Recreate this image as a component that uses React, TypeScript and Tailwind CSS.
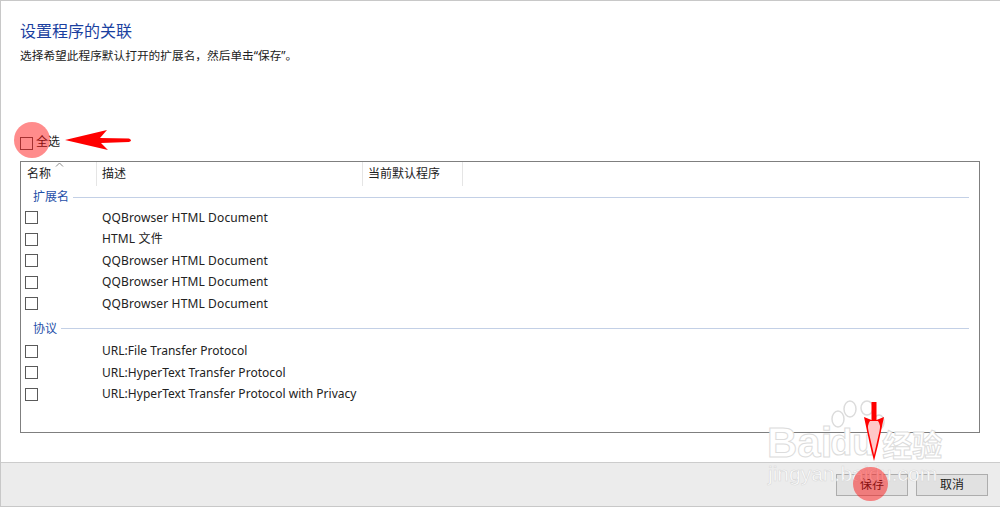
const font = { fontFamily: '"Noto Sans", "Noto Sans CJK SC", sans-serif' }

const extensions = [
  'QQBrowser HTML Document',
  'HTML 文件',
  'QQBrowser HTML Document',
  'QQBrowser HTML Document',
  'QQBrowser HTML Document',
]
const protocols = [
  'URL:File Transfer Protocol',
  'URL:HyperText Transfer Protocol',
  'URL:HyperText Transfer Protocol with Privacy',
]

function Box() {
  return <div className="w-[13px] h-[13px] border border-[#5a5a5a] bg-white shrink-0" />
}

function Group({ label, className }: { label: string; className: string }) {
  return (
    <div className={`flex items-center h-[16px] pl-[12px] gap-[4px] ${className}`}>
      <span className="text-[12px] leading-none text-[#1f4fa8]">{label}</span>
      <div className="flex-1 h-px bg-[#c3d0e6] mr-[10px]" />
    </div>
  )
}

function Row({ text, className }: { text: string; className: string }) {
  return (
    <div className="flex items-center h-[21.5px] pl-[4px]">
      <Box />
      <span className={`ml-[64px] text-[12px] leading-none text-[#222] ${className}`}>{text}</span>
    </div>
  )
}

function Arrow({ className }: { className: string }) {
  return (
    <svg className={className} viewBox="0 0 68 22" fill="#ff0000">
      <path d="M0 10 L42 0 L35 8 L64 8.5 Q68 10.5 64 12 L36 13 L43 20 Z" />
    </svg>
  )
}

export default function App() {
  return (
    <div className="relative w-[1000px] h-[507px] overflow-hidden bg-white flex flex-col border-t border-l border-[#c8c8c8]" style={font}>
      <div className="flex-1 flex flex-col pl-[19px] pr-[20px]">
        <h1 className="mt-[20px] text-[16px] leading-[20px] font-normal text-[#1a3fa0]">设置程序的关联</h1>
        <p className="mt-[6px] text-[11.7px] leading-[16px] text-[#222]">选择希望此程序默认打开的扩展名，然后单击“保存”。</p>
        <div className="mt-[69px] h-[20px] flex items-center">
          <div className="mt-[3px]"><Box /></div>
          <span className="ml-[3px] text-[12px] leading-none text-[#222]">全选</span>
        </div>
        <div className="mt-[9px] h-[272px] w-[960px] border border-[#7f7f7f] flex flex-col">
          <div className="relative flex h-[24px] text-[12px] text-[#222]">
            <div className="w-[76px] pl-[6px] flex items-center border-r border-[#e5e5e5]">名称</div>
            <div className="w-[266px] pl-[5px] flex items-center border-r border-[#e5e5e5]">描述</div>
            <div className="w-[100px] pl-[5px] flex items-center border-r border-[#e5e5e5]">当前默认程序</div>
            <svg className="absolute left-[34px] top-[0px]" width="9" height="5" viewBox="0 0 9 5" fill="none" stroke="#8a8a8a" strokeWidth="1">
              <path d="M1 4.5 L4.5 1 L8 4.5" />
            </svg>
          </div>
          <Group label="扩展名" className="mt-[3px]" />
          <div className="mt-[2px]">
            {extensions.map((t, i) => <Row key={i} text={t} className="tracking-[0.13px]" />)}
          </div>
          <Group label="协议" className="mt-[6px]" />
          <div className="mt-[4px]">
            {protocols.map((t, i) => <Row key={i} text={t} className="tracking-[0.03px]" />)}
          </div>
        </div>
      </div>
      <div className="h-[44px] mb-[1px] bg-[#ececec] border-t border-[#cccccc] flex items-center justify-end gap-[8px] pr-[12px]">
        <button className="w-[72px] h-[22px] bg-[#e1e1e1] border border-[#adadad] text-[12px] leading-none text-[#222]">保存</button>
        <button className="w-[72px] h-[22px] bg-[#e1e1e1] border border-[#adadad] text-[12px] leading-none text-[#222]">取消</button>
      </div>
      <div className="absolute bottom-0 left-0 right-0 h-px bg-[#c8c8c8]" />

      {/* baidu watermark */}
      <div className="absolute left-[766px] top-[421px] flex items-center text-[42px] leading-none font-bold text-white [-webkit-text-stroke:1px_#dcdcdc] pointer-events-none" style={{ fontFamily: '"Liberation Sans", sans-serif' }}>
        <span>Bai</span>
        <span className="ml-[-2px] text-[36px]">du</span>
        <span className="ml-[8px] text-[30px]" style={{ fontFamily: '"Noto Sans CJK SC", sans-serif' }}>经验</span>
      </div>
      <svg className="absolute left-[828px] top-[399px] pointer-events-none" width="60" height="40" viewBox="0 0 60 40" fill="#ffffff" stroke="#dcdcdc" strokeWidth="1.5">
        <ellipse cx="9" cy="19" rx="6" ry="8" />
        <ellipse cx="21" cy="9" rx="6" ry="8" />
        <ellipse cx="38" cy="8" rx="6" ry="7" />
        <ellipse cx="50" cy="22" rx="5" ry="7" />
      </svg>
      <div className="absolute left-[767px] top-[462px] text-[21px] leading-none text-white [-webkit-text-stroke:0.6px_#d8d8d8] pointer-events-none" style={{ fontFamily: '"Liberation Sans", sans-serif' }}>jingyan.baidu.com</div>

      {/* red annotations */}
      <div className="absolute left-[13px] top-[121px] w-[36px] h-[36px] rounded-full bg-[#ff0000]/45" />
      <Arrow className="absolute left-[64px] top-[129px] w-[68px] h-[22px]" />
      <div className="absolute left-[852px] top-[466px] w-[35px] h-[34px] rounded-full bg-[#ff0000]/45" />
      <svg className="absolute left-[861px] top-[400px]" width="24" height="62" viewBox="0 0 24 62">
        <path d="M9.5 1 H14.5 V19 L22 16 L16 44 L12 60 L8 44 L2 16 L9.5 19 Z" fill="#ff0000" />
        <path d="M12 54 L6.5 30 Q5 24 8 20 H16 Q19 24 17.5 30 Z" fill="#ffc8c8" />
      </svg>
    </div>
  )
}
